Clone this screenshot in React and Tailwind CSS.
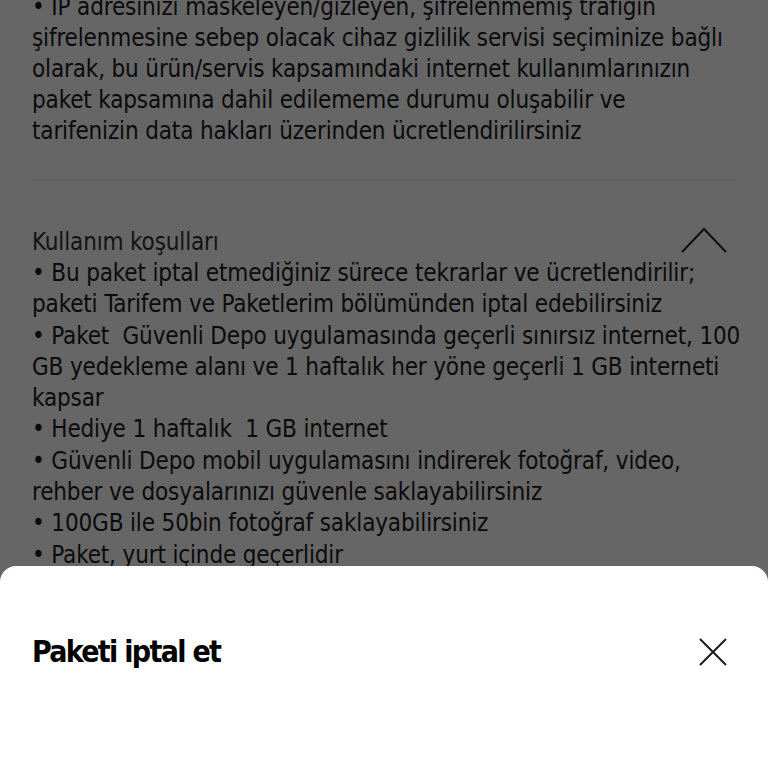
const font = { fontFamily: '"DejaVu Sans Condensed", "Liberation Sans Narrow", sans-serif' }

const firstBlock = [
    '• IP adresinizi maskeleyen/gizleyen, şifrelenmemiş trafiğin',
    'şifrelenmesine sebep olacak cihaz gizlilik servisi seçiminize bağlı',
    'olarak, bu ürün/servis kapsamındaki internet kullanımlarınızın',
    'paket kapsamına dahil edilememe durumu oluşabilir ve',
    'tarifenizin data hakları üzerinden ücretlendirilirsiniz',
]

const terms = [
    '• Bu paket iptal etmediğiniz sürece tekrarlar ve ücretlendirilir;',
    'paketi Tarifem ve Paketlerim bölümünden iptal edebilirsiniz',
    '• Paket  Güvenli Depo uygulamasında geçerli sınırsız internet, 100',
    'GB yedekleme alanı ve 1 haftalık her yöne geçerli 1 GB interneti',
    'kapsar',
    '• Hediye 1 haftalık  1 GB internet',
    '• Güvenli Depo mobil uygulamasını indirerek fotoğraf, video,',
    'rehber ve dosyalarınızı güvenle saklayabilirsiniz',
    '• 100GB ile 50bin fotoğraf saklayabilirsiniz',
    '• Paket, yurt içinde geçerlidir',
]

export default function App() {
    return (
        <div className="relative h-[768px] w-[768px] overflow-hidden bg-white" style={font}>
            {/* Page content */}
            <div className="px-8 -mt-[8px] text-[#1a1a1a] tracking-[-0.15px]">
                <div className="text-[24px] leading-[31px] whitespace-pre">
                    {firstBlock.map((l) => (
                        <div key={l}>{l}</div>
                    ))}
                </div>
                <div className="mt-[32px] h-[2px] bg-[#ebebeb]" />
                <div className="mt-[46px] flex items-start justify-between">
                    <p className="text-[24px] leading-[31px] text-[#333]">Kullanım koşulları</p>
                    <svg width="48" height="28" viewBox="0 0 48 28" className="-mt-[1px] mr-[8px]" fill="none" stroke="#222" strokeWidth="2">
                        <path d="M2 26 L24 3 L46 26" />
                    </svg>
                </div>
                <div className="text-[24px] leading-[31.3px] whitespace-pre">
                    {terms.map((l) => (
                        <div key={l}>{l}</div>
                    ))}
                </div>
            </div>

            {/* Dim overlay */}
            <div className="absolute inset-0 bg-black/60" />

            {/* Bottom sheet */}
            <div className="absolute left-0 right-0 top-[566px] bottom-0 rounded-t-[16px] bg-white">
                <div className="flex items-center justify-between pl-8 pr-[41px] pt-[68px]">
                    <h2 className="text-[30px] leading-[36px] font-bold tracking-[-1.7px] text-black">Paketi iptal et</h2>
                    <svg width="28" height="28" viewBox="0 0 28 28" fill="none" stroke="#1a1a1a" strokeWidth="2">
                        <path d="M1 1 L27 27 M27 1 L1 27" />
                    </svg>
                </div>
            </div>
        </div>
    )
}
